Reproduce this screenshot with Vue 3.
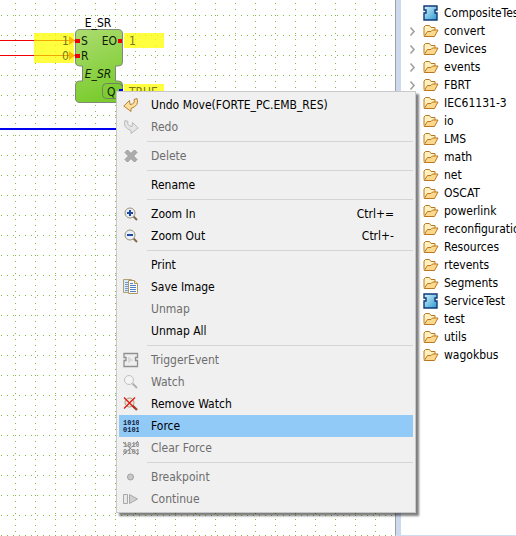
<script setup>
const groups = [
  [
    { label: 'Undo Move(FORTE_PC.EMB_RES)', icon: 'undo' },
    { label: 'Redo', icon: 'redo', off: true },
  ],
  [{ label: 'Delete', icon: 'delete', off: true }],
  [{ label: 'Rename' }],
  [
    { label: 'Zoom In', icon: 'zoomin', keys: 'Ctrl+=' },
    { label: 'Zoom Out', icon: 'zoomout', keys: 'Ctrl+-' },
  ],
  [
    { label: 'Print' },
    { label: 'Save Image', icon: 'save' },
    { label: 'Unmap', off: true },
    { label: 'Unmap All' },
  ],
  [
    { label: 'TriggerEvent', icon: 'trigger', off: true },
    { label: 'Watch', icon: 'watch', off: true },
    { label: 'Remove Watch', icon: 'unwatch' },
    { label: 'Force', icon: 'force', active: true },
    { label: 'Clear Force', icon: 'clear', off: true },
  ],
  [
    { label: 'Breakpoint', icon: 'breakpoint', off: true },
    { label: 'Continue', icon: 'continue', off: true },
  ],
]

const names = [
  'CompositeTest', 'convert', 'Devices', 'events', 'FBRT', 'IEC61131-3', 'io',
  'LMS', 'math', 'net', 'OSCAT', 'powerlink', 'reconfiguration', 'Resources',
  'rtevents', 'Segments', 'ServiceTest', 'test', 'utils', 'wagokbus',
]
const tree = names.map((name) => ({ name, block: name.endsWith('Test') }))
</script>

<template>
  <div class="workbench">
    <main class="editor">
      <svg class="canvas">
        <defs>
          <pattern id="rows" width="6" height="20" patternUnits="userSpaceOnUse">
            <rect x="1" y="15" width="1" height="1" fill="#84bc44" />
          </pattern>
          <pattern id="cols" width="20" height="6" patternUnits="userSpaceOnUse">
            <rect x="15" y="3" width="1" height="1" fill="#84bc44" />
          </pattern>
          <linearGradient id="body" x1="0" y1="0" x2="0.3" y2="1">
            <stop offset="0" stop-color="#acdc70" />
            <stop offset="1" stop-color="#7ccc30" />
          </linearGradient>
        </defs>
        <rect width="100%" height="100%" fill="url(#rows)" />
        <rect width="100%" height="100%" fill="url(#cols)" />
        <path d="M0 129H130" stroke="#0000f0" stroke-width="2" />
        <path d="M0 40.5H75M0 55.5H75" stroke="#f00000" stroke-width="1" />
        <g fill="#ffff00" fill-opacity=".75">
          <rect x="34" y="33" width="40" height="15" />
          <rect x="34" y="48" width="40" height="15" />
          <rect x="124" y="33" width="40" height="15" />
          <rect x="124" y="84" width="40" height="15" />
        </g>
        <path d="M34 40.5H70M34 55.5H70" stroke="#f0a800" />
        <path d="M69 36l6 4.500-6 4.500zM69 51l6 4.500-6 4.500z" fill="#ffb400" />
        <path
          d="M80 29.500H118Q122.500 29.500 122.500 34V62Q122.500 66 118.500 66H115.500V81H118.500Q122.500 81 122.500 85V98Q122.500 102.500 118 102.500H80Q75.500 102.500 75.500 98V85Q75.500 81 79.500 81H82.500V66H79.500Q75.500 66 75.500 62V34Q75.500 29.500 80 29.500Z"
          fill="url(#body)" stroke="#808878"
        />
        <rect x="102.500" y="83.500" width="20" height="15" rx="4" fill="none" stroke="#708060" />
        <path d="M75 39h5v4h-5zM75 54h5v4h-5zM118 39h4v4h-4z" fill="#f00000" />
        <path d="M119 89h4v5h-4z" fill="#0000f0" />
        <g class="value">
          <text x="62" y="45">1</text>
          <text x="62" y="60">0</text>
          <text x="129" y="45">1</text>
          <text x="129" y="96">TRUE</text>
        </g>
        <g class="port">
          <text x="98" y="27" text-anchor="middle" class="title">E_SR</text>
          <text x="81" y="45">S</text>
          <text x="81" y="60">R</text>
          <text x="117" y="45" text-anchor="end">EO</text>
          <text x="98" y="78" text-anchor="middle" font-style="italic">E_SR</text>
          <text x="107" y="96">Q</text>
        </g>
      </svg>
    </main>

    <aside class="explorer">
      <ul class="tree">
        <li v-for="node in tree" :key="node.name">
          <a href="#" class="node">
            <svg class="arrow" width="8" height="12" viewBox="0 0 8 12">
              <path v-if="!node.block" d="M1.500 2.500L5 6.500L1.500 10.500" fill="none" stroke="#a0a0a0" stroke-width="1.600" />
            </svg>
            <svg v-if="node.block" width="16" height="16" viewBox="0 0 16 16">
              <defs>
                <linearGradient :id="'blk' + node.name" x1="0" y1="0" x2="1" y2="1">
                  <stop offset="0" stop-color="#d8f4fc" />
                  <stop offset="1" stop-color="#2898d0" />
                </linearGradient>
              </defs>
              <path d="M1 1H14V5H12V8H14V15H1V8H3V5H1Z" :fill="'url(#blk' + node.name + ')'" stroke="#103878" stroke-width="1.400" />
            </svg>
            <svg v-else width="16" height="16" viewBox="0 0 16 16">
              <path d="M1 12.500V4L2.500 2.500H6.500L8 4.500H12V7" fill="#fff0c0" stroke="#b87820" />
              <path d="M1.200 13.500L4.500 8.500H8L9.500 7H15L11.500 13.500Z" fill="#fcd88c" stroke="#b87820" stroke-linejoin="round" />
            </svg>
            <span>{{ node.name }}</span>
          </a>
        </li>
      </ul>
    </aside>

    <nav class="menu" role="menu">
      <div v-for="(group, g) in groups" :key="g" class="group">
        <button
          v-for="item in group" :key="item.label" type="button" role="menuitem"
          class="item" :class="{ active: item.active }" :disabled="item.off"
        >
          <svg class="icon" width="16" height="16" viewBox="0 0 16 16">
            <g v-if="item.icon === 'undo'" stroke-linejoin="round">
              <path d="M14 1.500Q16.500 8.500 8 11.500V14.500L.8 9L6.500 3.500L7 7.500Q12.500 7 11 2.500Z" fill="#fce0a0" stroke="#b88030" />
            </g>
            <g v-else-if="item.icon === 'redo'" stroke-linejoin="round">
              <path d="M2 1.500Q-.5 8.500 8 11.500V14.500L15.200 9L9.500 3.500L9 7.500Q3.500 7 5 2.500Z" fill="#e6e6e6" stroke="#b8b8b8" />
            </g>
            <path
              v-else-if="item.icon === 'delete'"
              d="M4.500 2L8 5.500L11.500 2L14 4.500L10.500 8L14 11.500L11.500 14L8 10.500L4.500 14L2 11.500L5.500 8L2 4.500Z"
              fill="#acacac" stroke="#989898" stroke-linejoin="round"
            />
            <g v-else-if="item.icon === 'zoomin' || item.icon === 'zoomout'">
              <path d="M10.500 10.500L14 14" stroke="#806850" stroke-width="2" />
              <circle cx="7" cy="7" r="5" fill="#e8f0fc" stroke="#a09070" />
              <path d="M4 7H10" stroke="#2048a0" stroke-width="2" />
              <path v-if="item.icon === 'zoomin'" d="M7 4V10" stroke="#2048a0" stroke-width="2" />
            </g>
            <g v-else-if="item.icon === 'save'">
              <path d="M.5 .5H8.500V13.500H.5Z" fill="#dceafa" stroke="#b0a070" />
              <path d="M2 3.500H5M2 5.500H5M2 7.500H5M2 9.500H5M2 11.500H5" stroke="#7898c0" />
              <path d="M5.500 1.500H11.500L14.500 4.500V14.500H5.500Z" fill="#f8faff" stroke="#b09860" />
              <path d="M11.500 1.500V4.500H14.500" fill="#fce8b0" stroke="#b09860" />
              <path d="M7 4.500H10M7 6.500H13M7 8.500H13M7 10.500H13M7 12.500H13" stroke="#5080c0" />
            </g>
            <g v-else-if="item.icon === 'trigger'">
              <path d="M1 1.500H14.500V5.500H12.500V8.500H14.500V14.500H1V8.500H3V5.500H1Z" fill="#eee" stroke="#909090" stroke-width="1.300" />
              <path d="M5 4.500L10 8L5 11.500Z" fill="#d8d8d8" />
            </g>
            <g v-else-if="item.icon === 'watch'">
              <path d="M9.500 9.500L14 14" stroke="#b0b0b0" stroke-width="2" />
              <circle cx="6" cy="6" r="4.500" fill="#f4f4f4" stroke="#c0c0c0" />
            </g>
            <g v-else-if="item.icon === 'unwatch'">
              <path d="M9.500 9.500L14 14" stroke="#885038" stroke-width="2.400" />
              <circle cx="6.500" cy="6.500" r="4.500" fill="#ece8d8" stroke="#a89878" />
              <path d="M1 1.500L12 12.500M12 1.500L1 12.500" stroke="#e01818" stroke-width="1.300" />
            </g>
            <g v-else-if="item.icon === 'force' || item.icon === 'clear'" class="bits" :fill="item.off ? '#888888' : '#102040'">
              <text x="0" y="7">1010</text>
              <text x="0" y="14">0101</text>
              <path v-if="item.off" d="M0 2L15 15M15 1L0 15" stroke="#909090" />
            </g>
            <circle v-else-if="item.icon === 'breakpoint'" cx="7.500" cy="8" r="3" fill="#c8c8c8" stroke="#a0a0a0" />
            <g v-else-if="item.icon === 'continue'" fill="#d0d0d0" stroke="#a8a8a8">
              <path d="M.5 3.500H4.500V12.500H.5Z" fill="#e8e8e8" />
              <path d="M6.500 3.500L14.500 8L6.500 12.500Z" />
            </g>
          </svg>
          <span class="label">{{ item.label }}</span>
          <span v-if="item.keys" class="keys">{{ item.keys }}</span>
        </button>
      </div>
    </nav>
  </div>
</template>

<style>
body {
  margin: 0;
  background: #fff;
}
</style>

<style scoped>
.workbench {
  position: relative;
  display: flex;
  min-height: 100vh;
  overflow: hidden;
  font-family: "DejaVu Sans Condensed", "Open Sans", sans-serif;
  font-size: 12px;
  color: #000;
}
.editor {
  display: flex;
  flex: 1;
  min-width: 0;
}
.canvas {
  width: 100%;
  min-height: 100%;
}
.port {
  font-size: 12px;
  fill: #101c08;
}
.title {
  fill: #000;
}
.value {
  font-size: 12px;
  fill: #787820;
}
.explorer {
  box-sizing: border-box;
  width: 121px;
  height: 100vh;
  overflow: hidden;
  border-left: 1px solid #a0a0a0;
  border-bottom: 1px solid #cddcee;
  box-shadow: inset 5px 0 #cddaee;
}
.tree {
  margin: 0;
  padding: 4px 0 0 13px;
  list-style: none;
}
.node {
  display: flex;
  align-items: center;
  height: 18px;
  color: inherit;
  text-decoration: none;
  white-space: nowrap;
}
.node svg {
  flex: none;
}
.arrow {
  margin-right: 6px;
}
.node span {
  margin-left: 5px;
}
.menu {
  position: absolute;
  left: 116px;
  top: 91px;
  box-sizing: border-box;
  width: 300px;
  padding: 2px;
  border: 1px solid #c8c8c8;
  background: #f0f0f0;
  box-shadow: 3px 3px 2px rgba(0, 0, 0, 0.5);
}
.group + .group::before {
  content: "";
  display: block;
  height: 1px;
  margin: 3px 0 3px 28px;
  background: #d4d4d4;
}
.item {
  display: flex;
  align-items: center;
  width: 100%;
  height: 22px;
  padding: 0 19px 0 4px;
  border: 0;
  background: none;
  color: #000;
  font: inherit;
  text-align: left;
  white-space: nowrap;
}
.item:disabled {
  color: #6d6d6d;
}
.item.active {
  background: #91c9f7;
}
.icon {
  flex: none;
  margin-right: 12px;
}
.label {
  flex: 1;
}
.bits {
  font: bold 7px "Liberation Mono", monospace;
}
</style>
